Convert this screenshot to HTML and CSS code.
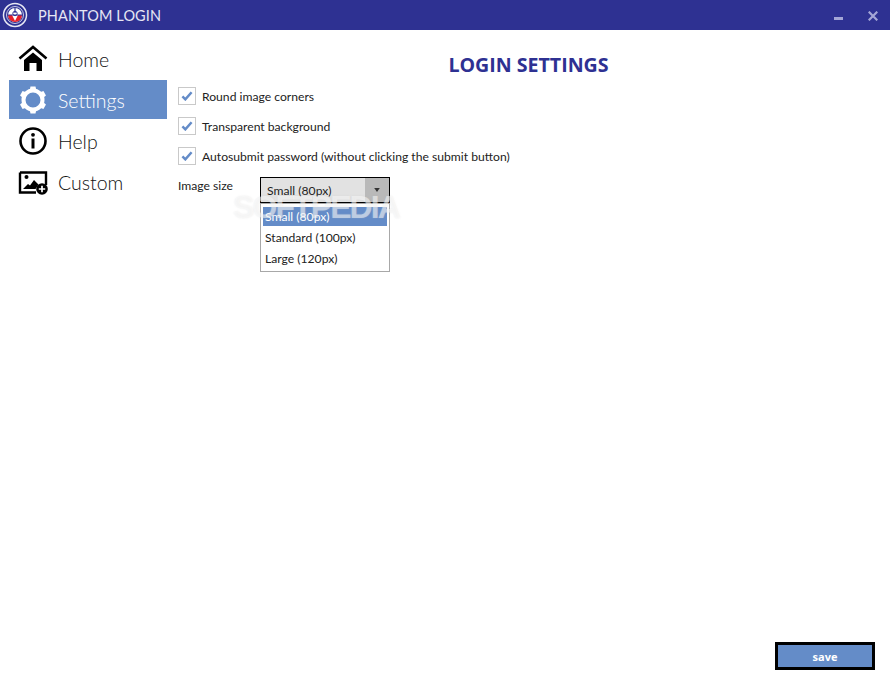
FILE: index.html
```
<!DOCTYPE html>
<html lang="en">
<head>
<meta charset="utf-8">
<title>Phantom Login</title>
<link rel="stylesheet" href="styles.css">
</head>
<body>
<div class="app">
  <header class="titlebar">
    <svg class="logo" viewBox="0 0 28 28" width="28" height="28">
      <circle cx="14" cy="14" r="11.500" fill="none" stroke="#e8e8f4" stroke-width="1.500"/>
      <circle cx="14" cy="14" r="8.500" fill="none" stroke="#c8c9e8" stroke-width="1"/>
      <circle cx="14" cy="14" r="7" fill="#fff"/>
      <path d="M7 14h14a7 7 0 0 1-14 0z" fill="#e8202a"/>
      <path d="M11 14l3 6 3-6z" fill="#fff"/>
      <path d="M14 7v5M7 14h14" stroke="#2e3192" stroke-width="1.200" fill="none"/>
      <circle cx="14" cy="12.500" r="2.200" fill="none" stroke="#2e3192" stroke-width="1"/>
    </svg>
    <span class="app-name">PHANTOM LOGIN</span>
    <span class="controls">
      <svg width="9" height="3" viewBox="0 0 9 3"><rect width="9" height="3" fill="#a4a6d6"/></svg>
      <svg width="10" height="10" viewBox="0 0 10 10"><path d="M.7.7l8.600 8.600M9.300.7L.7 9.300" stroke="#a4a6d6" stroke-width="2.200" fill="none"/></svg>
    </span>
  </header>
  <div class="body">
    <nav class="sidebar">
      <a class="nav-item">
        <svg class="nav-icon" viewBox="0 0 30 30" width="30" height="30">
          <path d="M1.500 14.500L15 3l13.500 11.500" fill="none" stroke="#000" stroke-width="2.600"/>
          <path d="M15 8.500l9 7.500v11h-5.500v-8h-7v8H6V16z" fill="#000"/>
        </svg>
        <span>Home</span>
      </a>
      <a class="nav-item active">
        <svg class="nav-icon" viewBox="0 0 30 30" width="30" height="30">
          <circle cx="15" cy="15" r="9.500" fill="none" stroke="#fff" stroke-width="4"/>
          <path id="tooth" d="M11.500 6.500L12.500 1.500h5L18.500 6.500z" fill="#fff"/>
          <path d="M11.500 6.500L12.500 1.500h5L18.500 6.500z" fill="#fff" transform="rotate(60 15 15)"/>
          <path d="M11.500 6.500L12.500 1.500h5L18.500 6.500z" fill="#fff" transform="rotate(120 15 15)"/>
          <path d="M11.500 6.500L12.500 1.500h5L18.500 6.500z" fill="#fff" transform="rotate(180 15 15)"/>
          <path d="M11.500 6.500L12.500 1.500h5L18.500 6.500z" fill="#fff" transform="rotate(240 15 15)"/>
          <path d="M11.500 6.500L12.500 1.500h5L18.500 6.500z" fill="#fff" transform="rotate(300 15 15)"/>
        </svg>
        <span>Settings</span>
      </a>
      <a class="nav-item">
        <svg class="nav-icon" viewBox="0 0 30 30" width="30" height="30">
          <circle cx="15" cy="15" r="12.500" fill="none" stroke="#000" stroke-width="2.600"/>
          <rect x="13.500" y="12.500" width="3" height="10" fill="#000"/>
          <circle cx="15" cy="8.800" r="1.900" fill="#000"/>
        </svg>
        <span>Help</span>
      </a>
      <a class="nav-item">
        <svg class="nav-icon" viewBox="0 0 30 30" width="30" height="30">
          <path d="M2 5.500h26V18M18 25.500H2v-20" fill="none" stroke="#000" stroke-width="2.400"/>
          <circle cx="8.500" cy="10" r="2" fill="#000"/>
          <path d="M5 22l5-5 2 1.500 4-5.500 4.500 4.500-3 4.500z" fill="#000"/>
          <circle cx="24" cy="22" r="5.800" fill="#000"/>
          <path d="M20.800 22h6.400M24 18.800v6.400" stroke="#fff" stroke-width="1.700"/>
        </svg>
        <span>Custom</span>
      </a>
    </nav>
    <main class="content">
      <h1 class="heading">LOGIN SETTINGS</h1>
      <label class="check-row"><span class="check"><svg width="12" height="10" viewBox="0 0 14 12"><path d="M1.500 6.500l3.500 3.500 7.500-8.500" fill="none" stroke="#648cc8" stroke-width="3"/></svg></span>Round image corners</label>
      <label class="check-row"><span class="check"><svg width="12" height="10" viewBox="0 0 14 12"><path d="M1.500 6.500l3.500 3.500 7.500-8.500" fill="none" stroke="#648cc8" stroke-width="3"/></svg></span>Transparent background</label>
      <label class="check-row"><span class="check"><svg width="12" height="10" viewBox="0 0 14 12"><path d="M1.500 6.500l3.500 3.500 7.500-8.500" fill="none" stroke="#648cc8" stroke-width="3"/></svg></span>Autosubmit password (without clicking the submit button)</label>
      <div class="size-row">
        <span class="size-label">Image size</span>
        <div class="combo">
          <div class="combo-box">
            <span class="combo-value">Small (80px)</span>
            <span class="combo-arrow"><svg width="6" height="4" viewBox="0 0 7 5"><path d="M0 0h7L3.500 5z" fill="#333"/></svg></span>
          </div>
          <ul class="combo-list">
            <li class="selected">Small (80px)</li>
            <li>Standard (100px)</li>
            <li>Large (120px)</li>
          </ul>
        </div>
      </div>
      <span class="watermark">SOFTPEDIA</span>
      <div class="footer"><button class="save" type="button">save</button></div>
    </main>
  </div>
</div>
</body>
</html>
```
FILE: styles.css
```
* { box-sizing: border-box; }
html, body { margin: 0; height: 100%; background: #fff; }
body { font-family: "Open Sans", "Noto Sans", "Liberation Sans", sans-serif; color: #222; overflow: hidden; }
.app { display: flex; flex-direction: column; height: 680px; }
.titlebar { height: 30px; background: #2e3192; display: flex; align-items: center; padding: 0 12px 0 1px; flex: none; }
.logo { flex: none; }
.app-name { color: #e6e6f4; font-family: "Lato", sans-serif; font-size: 14.500px; margin-left: 9px; letter-spacing: .1px; }
.controls { margin-left: auto; display: flex; align-items: center; gap: 25px; padding-top: 1px; }
.controls svg:first-child { margin-top: 5px; }
.body { flex: 1; display: flex; min-height: 0; }
.sidebar { width: 170px; flex: none; padding: 9px 3px 0 9px; display: flex; flex-direction: column; gap: 2px; }
.nav-item { height: 39px; display: flex; align-items: center; padding-left: 9px; gap: 10px; font-family: "Lato", sans-serif; font-size: 19.500px; font-weight: 300; color: #111; }
.nav-item span { padding-top: 2px; }
.nav-item.active { background: #648cc8; color: #fff; }
.nav-icon { flex: none; }
.content { flex: 1; padding: 0 15px 10px 8px; display: flex; flex-direction: column; position: relative; }
.heading { margin: 21px 0 9px; padding-left: 4px; height: 27px; line-height: 27px; text-align: center; font-family: "Open Sans", sans-serif; font-size: 19.600px; font-weight: 700; color: #2e3192; }
.check-row { display: flex; align-items: center; height: 18px; margin-bottom: 12px; font-family: "Lato", sans-serif; font-size: 12.150px; }
.check { width: 18px; height: 18px; border: 1px solid #c9c9c9; display: flex; align-items: center; justify-content: center; margin-right: 6px; }
.size-row { display: flex; align-items: flex-start; }
.size-label { width: 82px; font-family: "Lato", sans-serif; font-size: 12.150px; line-height: 18px; }
.combo { width: 130px; }
.combo-box { height: 26px; border: 1px solid #000; background: #e2e2e2; display: flex; }
.combo-value { flex: 1; padding-left: 6px; font-family: "Lato", sans-serif; font-size: 12.150px; line-height: 26px; }
.combo-arrow { width: 24px; background: #b9b9b9; display: flex; align-items: center; justify-content: center; }
.combo-list { list-style: none; margin: 0; padding: 3px 2px 2px; height: 69px; border: 1px solid #a8a8a8; background: #fff; font-family: "Lato", sans-serif; font-size: 12.150px; }
.combo-list li { height: 19px; line-height: 19px; padding-left: 2px; margin-bottom: 2px; }
.combo-list li.selected { background: #648cc8; color: #fff; }
.watermark { position: absolute; left: 63px; top: 159px; font-family: "Liberation Sans", sans-serif; font-size: 32px; font-weight: 700; letter-spacing: -1.900px; color: rgba(255,255,255,.5); text-shadow: 0 0 2px rgba(190,190,190,.3); pointer-events: none; }
.footer { margin-top: auto; display: flex; justify-content: flex-end; }
.save { width: 100px; height: 28px; border: 3px solid #000; background: #648cc8; color: #fff; font-family: "Open Sans", sans-serif; font-size: 11px; font-weight: 700; padding: 0; }
```
